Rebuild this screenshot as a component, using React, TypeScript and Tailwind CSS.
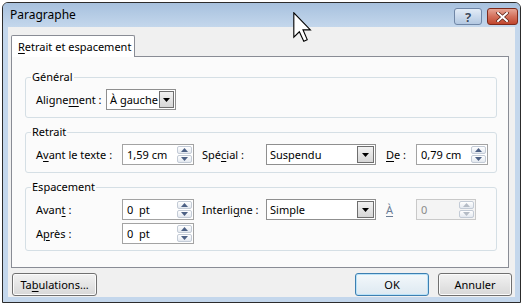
import type { ReactNode } from 'react'

const ui = "font-['Noto_Sans','Liberation_Sans',sans-serif] text-[11px] leading-[16px] text-black whitespace-nowrap"

function Key({ children }: { children: ReactNode }) {
  return <span className="underline underline-offset-[2px] decoration-1">{children}</span>
}

function Arrow({ up, color }: { up?: boolean; color: string }) {
  return (
    <svg width="7" height="4" viewBox="0 0 7 4">
      <polygon points={up ? '0,4 7,4 3.5,0' : '0,0 7,0 3.5,4'} fill={color} />
    </svg>
  )
}

type SpinProps = { value: string; width: string; disabled?: boolean }
function Spin({ value, width, disabled }: SpinProps) {
  return (
    <div
      className={`flex h-[21px] border ${width} ${
        disabled ? 'border-[#c9c9c9] bg-[#f4f4f4] text-[#8a8a8a]' : 'border-[#a3a3a3] bg-white'
      }`}
    >
      <div className="flex-1 whitespace-pre pl-[4px] leading-[19px]">{value}</div>
      <div className="flex w-[17px] flex-col gap-px p-px">
        <div className="flex flex-1 items-center justify-center rounded-[2px] border border-[#c3cbd6] bg-gradient-to-b from-white to-[#e4e9f0]">
          <Arrow up color={disabled ? '#b5bcc6' : '#4d6185'} />
        </div>
        <div className="flex flex-1 items-center justify-center rounded-[2px] border border-[#c3cbd6] bg-gradient-to-b from-white to-[#e4e9f0]">
          <Arrow color={disabled ? '#b5bcc6' : '#4d6185'} />
        </div>
      </div>
    </div>
  )
}

function Combo({ value, width }: { value: string; width: string }) {
  return (
    <div className={`flex h-[21px] border border-[#8f8f8f] bg-white ${width}`}>
      <div className="flex-1 pl-[3px] leading-[19px]">{value}</div>
      <div className="m-px flex w-[17px] items-center justify-center border border-[#6e6e6e] bg-gradient-to-b from-[#f2f2f2] to-[#d6d6d6]">
        <Arrow color="#000" />
      </div>
    </div>
  )
}

function Group({ title, height, children }: { title: string; height: string; children: ReactNode }) {
  return (
    <fieldset className={`rounded-[3px] border border-[#d5dfe5] ${height}`}>
      <legend className="ml-[5px] px-[1px]">{title}</legend>
      <div className="flex flex-col gap-[3px] pl-[10px] pt-[4px]">{children}</div>
    </fieldset>
  )
}

function Button({ children, primary, width }: { children: ReactNode; primary?: boolean; width: string }) {
  return (
    <div
      className={`flex h-[23px] items-center justify-center rounded-[3px] border ${width} ${
        primary
          ? 'border-[#3c7fb1] bg-gradient-to-b from-[#f3f8fb] to-[#dde9f1] shadow-[inset_0_0_0_1px_#b9e2f8]'
          : 'border-[#707070] bg-gradient-to-b from-[#f2f2f2] to-[#d8d8d8] shadow-[inset_0_0_0_1px_#fbfbfb]'
      }`}
    >
      {children}
    </div>
  )
}

export default function App() {
  return (
    <div className={`relative h-[306px] w-[522px] bg-white pl-[2px] pt-[2px] ${ui}`}>
      <div className="flex h-[301px] w-[519px] flex-col rounded-t-[6px] border border-[#2c2c2c] bg-[#c4d7ec]">
        {/* title bar */}
        <div className="flex h-[24px] items-center rounded-t-[5px] bg-gradient-to-b from-[#a7c1de] to-[#c4d7ec] pl-[7px] pr-[2px]">
          <span className="text-[12px]">Paragraphe</span>
          <div className="ml-auto mt-[5px] flex gap-[5px] self-start">
            <div className="flex h-[17px] w-[28px] items-center justify-center rounded-[3px] border border-[#6f86a6] bg-gradient-to-b from-[#e3ecf7] to-[#b3c8e1] text-[13px] font-bold text-[#3a4a5e] [text-shadow:0_0_1px_#fff]">
              ?
            </div>
            <div className="flex h-[17px] w-[31px] items-center justify-center rounded-[3px] border border-[#7e2a1b] bg-gradient-to-b from-[#e6a595] via-[#d3705b] to-[#c0452d]">
              <svg width="13" height="10" viewBox="0 0 13 10">
                <path d="M2 1 L11 9 M11 1 L2 9" stroke="#5a1f14" strokeWidth="3.4" strokeLinecap="square" />
                <path d="M2 1 L11 9 M11 1 L2 9" stroke="#fff" strokeWidth="2" strokeLinecap="square" />
              </svg>
            </div>
          </div>
        </div>

        {/* client area */}
        <div className="mx-[5px] flex h-[270px] flex-col bg-[#f0f0f0] pl-[3px]">
          <div className="mt-[8px] flex">
            <div className="z-10 -mb-px flex h-[22px] w-[124px] items-center rounded-t-[2px] border border-b-0 border-[#898c95] bg-white pl-[6px]">
              <span>
                <Key>R</Key>etrait et espacement
              </span>
            </div>
          </div>
          <div className="flex h-[212px] w-[498px] flex-col gap-[6px] border border-[#898c95] bg-[#fbfbfb] pl-[13px] pr-[11px] pt-[12px]">
            <Group title="Général" height="h-[49px]">
              <div className="flex items-center">
                <span className="w-[70px]">
                  Aligne<Key>m</Key>ent :
                </span>
                <Combo value="À gauche" width="w-[70px]" />
              </div>
            </Group>
            <Group title="Retrait" height="h-[49px]">
              <div className="flex items-center">
                <span className="w-[86px]">
                  A<Key>v</Key>ant le texte :
                </span>
                <Spin value="1,59 cm" width="w-[72px]" />
                <span className="ml-[8px] w-[64px]">
                  Spé<Key>c</Key>ial :
                </span>
                <Combo value="Suspendu" width="w-[110px]" />
                <span className="ml-[10px] w-[30px]">
                  <Key>D</Key>e :
                </span>
                <Spin value="0,79 cm" width="w-[72px]" />
              </div>
            </Group>
            <Group title="Espacement" height="h-[72px]">
              <div className="flex items-center">
                <span className="w-[86px]">
                  Avan<Key>t</Key> :
                </span>
                <Spin value="0  pt" width="w-[72px]" />
                <span className="ml-[8px] w-[64px]">
                  Interli<Key>g</Key>ne :
                </span>
                <Combo value="Simple" width="w-[110px]" />
                <span className="ml-[10px] w-[30px] text-[#6b7d96]">
                  <Key>À</Key>
                </span>
                <Spin value="0" width="w-[60px]" disabled />
              </div>
              <div className="flex items-center">
                <span className="w-[86px]">
                  A<Key>p</Key>rès :
                </span>
                <Spin value="0  pt" width="w-[72px]" />
              </div>
            </Group>
          </div>

          {/* buttons */}
          <div className="mt-[5px] flex items-center pl-[1px]">
            <Button width="w-[85px]">
              <span>
                Ta<Key>b</Key>ulations…
              </span>
            </Button>
            <div className="ml-auto mr-[3px] flex gap-[9px]">
              <Button primary width="w-[74px]">
                OK
              </Button>
              <Button width="w-[74px]">Annuler</Button>
            </div>
          </div>
        </div>
      </div>

      {/* mouse pointer */}
      <svg className="absolute left-[293px] top-[12px]" width="19" height="30" viewBox="0 0 12 19">
        <polygon
          points="0.5,0.5 0.5,16 4,12.5 6.8,18.5 9,17.5 6.3,11.3 11,11.3"
          fill="#fff"
          stroke="#000"
          strokeWidth="0.7"
          strokeLinejoin="miter"
        />
      </svg>
    </div>
  )
}
